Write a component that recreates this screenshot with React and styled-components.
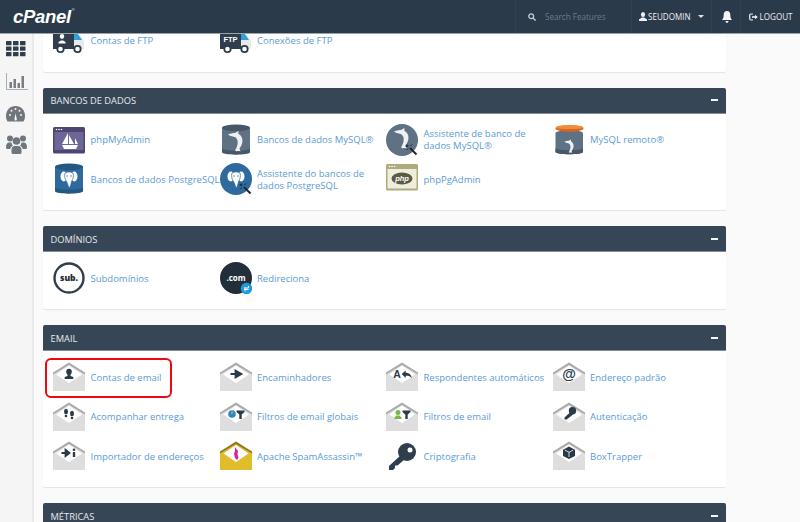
import React from "react";
import styled, { createGlobalStyle } from "styled-components";

const Global = createGlobalStyle`
  html, body { margin: 0; padding: 0; height: 100%; background: #fafafa; }
  body { font-family: "Open Sans", "Liberation Sans", sans-serif; overflow: hidden; }
  #root { height: 100%; }
`;

const Page = styled.div`
  width: 800px; height: 522px; display: flex; flex-direction: column; overflow: hidden;
`;
const TopBar = styled.header`
  height: 33px; flex: none; display: flex; align-items: stretch; justify-content: space-between;
  background: #2a3a4b; border-bottom: 1px solid #9aa2aa; z-index: 2;
`;
const Logo = styled.div`
  padding: 4px 0 0 13px; font-family: "Liberation Sans", sans-serif; font-size: 18.5px; font-weight: 700;
  font-style: italic; color: #fff; letter-spacing: -0.3px; line-height: 26px; display: flex; align-items: flex-start;
  sup { font-size: 4px; line-height: 12px; font-style: normal; font-weight: 400; margin-left: 1px; }
`;
const TopNav = styled.nav`
  display: flex; align-items: stretch;
`;
const NavCell = styled.div`
  width: ${p => p.$w}px; box-sizing: border-box; border-left: 1px solid #31414f; display: flex; align-items: center;
  padding-left: ${p => p.$pl}px; gap: ${p => p.$gap || 0}px; font-size: 8.1px; color: ${p => p.$muted ? "#6d7a87" : "#eef0f2"};
  white-space: nowrap;
`;
const Layout = styled.div`
  flex: 1; min-height: 0; display: flex;
`;
const Side = styled.aside`
  width: 26px; flex: none; background: #f5f5f5; border-right: 2px solid #e9e9e9; display: flex; flex-direction: column;
  align-items: flex-start; padding: 7px 0 0 6px;
`;
const SideIcon = styled.div`
  height: ${p => p.$h}px; display: flex; align-items: flex-start;
`;
const Main = styled.main`
  flex: 1; min-width: 0; overflow: hidden; padding: 0 74px 0 9px;
`;
const Scroller = styled.div`
  margin-top: -19.5px; display: flex; flex-direction: column; gap: 16px;
`;
const Panel = styled.section`
  background: #fff; border-radius: 2px; box-shadow: 0 1px 1px rgba(0,0,0,.09);
`;
const PanelHead = styled.div`
  height: 26px; box-sizing: border-box; background: #364656; border-bottom: 1px solid #7f8b96; border-radius: 2px 2px 0 0;
  padding: 1px 8px 0 7.5px; display: flex; align-items: center; justify-content: space-between;
  color: #e6e9ec; font-size: 9.3px; text-transform: uppercase;
`;
const Collapse = styled.span`
  width: 7px; height: 2px; background: #f4f5f6; display: block; margin-top: -1px;
`;
const Grid = styled.div`
  display: grid; grid-template-columns: repeat(4, 166.5px); row-gap: 7.5px; padding: 10px 0 15px 10px;
`;
const Item = styled.a`
  position: relative; display: flex; align-items: center; height: 32px; gap: 5.5px; color: #5b9bd5; font-size: 9.5px;
  line-height: 12px; text-decoration: none; white-space: nowrap;
  svg { flex: none; }
  ${p => p.$hl && `
    &::after {
      content: ""; position: absolute; left: -8px; top: -3px; width: 127px; height: 40px; box-sizing: border-box;
      border: 2px solid #ee0612; border-radius: 6px;
    }
  `}
`;
const Label = styled.span`
  padding-top: 1px;
`;

const Ic = ({ children, w = 32, h = 32 }) => (
  <svg width={w} height={h} viewBox={`0 0 ${w} ${h}`}>{children}</svg>
);

const D = "#2b3a49";
const Env = ({ children }) => (
  <Ic>
    <path d="M0 12.5 16 2 32 12.5V30H0Z" fill="#dedede" />
    <path d="M0 13.500V11.500L16 1.500 32 11.500V13.500L16 4Z" fill="#aaa" />
    <path d="M3 13.500 16 4.500 29 13.500 16 22Z" fill="#fff" />
    {children}
  </Ic>
);

const Truck = ({ children }) => (
  <Ic>
    <path d="M21 10h6l4 6v8H21Z" fill="#e7e9ea" />
    <path d="M21 8.500h3.500l4.500 6.500h-8Z" fill="#2f9fe0" />
    <path d="M0 0H21V24H0Z" fill="#2f3d4c" />
    <circle cx="7.500" cy="24" r="3.200" fill="#fff" stroke={D} strokeWidth="1.800" />
    <circle cx="24.500" cy="24" r="3.200" fill="#fff" stroke={D} strokeWidth="1.800" />
    {children}
  </Ic>
);

const DOLPHIN = "M8 10.500C10.500 9.500 13 9 15 9L18.500 7 18.300 9.800C21.500 11.500 23 15 22.300 18.500 21.800 21 20.500 23 19.500 24.500L20.500 27.500C19 27 17.500 26.800 16.500 27.500 16 26.800 15.500 26.500 15 26.500 16.500 24 17.500 21.500 17.700 19 18 16 16.500 13.500 14 12.800 12 12.300 10 12 8 10.500Z";
const Dolphin = ({ t }) => <path transform={t} d={DOLPHIN} fill="#eef1f3" />;

const Elephant = ({ x = 0, y = 0, s = 1, c = "#2e6a9e" }) => (
  <g transform={`translate(${x} ${y}) scale(${s})`}>
    <ellipse cx="3.300" cy="5.500" rx="3.300" ry="5" fill="#fff" />
    <ellipse cx="13.700" cy="5.500" rx="3.300" ry="5" fill="#fff" />
    <path d="M4.500 2C6.500.5 10.500.5 12.500 2 13.500 5 12.500 8.500 11 10.500 10.500 12.500 10.300 15 9 16.500 8 16.500 7.500 13 6 10.500 4.500 8.500 3.500 5 4.500 2Z" fill="#fff" stroke={c} strokeWidth=".7" />
    <circle cx="6.500" cy="5" r=".7" fill={c} />
    <circle cx="10.500" cy="5" r=".7" fill={c} />
  </g>
);

const Wand = ({ x, y }) => (
  <g transform={`translate(${x} ${y})`} fill="none">
    <path d="M0 0 6.500 6.500" stroke="#1c2730" strokeWidth="2" />
    <path d="M-3-3.500V-1M-4.500-2H-1.500M2-3.500 .5-2M-3.500 2-2 .5" stroke="#10181f" strokeWidth=".9" />
  </g>
);

const Db = ({ mid, bottom, children }) => (
  <Ic>
    <path d="M2 4V28C2 31 30 31 30 28V4Z" fill={mid} />
    <path d="M2 24V28C2 31.500 30 31.500 30 28V24C30 27.500 2 27.500 2 24Z" fill={bottom} />
    <ellipse cx="16" cy="3.800" rx="14" ry="3.300" fill={bottom} />
    {children}
  </Ic>
);

const G = ({ children }) => <g transform="translate(0 2)">{children}</g>;

const icons = {
  ftp: <Truck>
    <ellipse cx="9" cy="11.500" rx="2.200" ry="2.400" fill="#fff" />
    <path d="M5.500 18.500V17L8 15.500H10L12.500 17V18.500Z" fill="#fff" />
  </Truck>,
  ftp2: <Truck>
    <text x="10.500" y="17" textAnchor="middle" fontFamily="Liberation Sans" fontWeight="700" fontSize="7.500" fill="#fff">FTP</text>
  </Truck>,
  pma: <Ic>
    <rect x="0" y="3" width="32" height="26.500" rx="1.500" fill="#4d4672" />
    <rect x="1.500" y="8" width="29" height="18" fill="#6d6798" />
    <circle cx="3.500" cy="5.500" r=".8" fill="#fff" /><circle cx="6" cy="5.500" r=".8" fill="#fff" /><circle cx="8.500" cy="5.500" r=".8" fill="#fff" />
    <path d="M15 9V20H9ZM16 11 21 20H16ZM22 14 25 20H22ZM9 21H25L23 25H11Z" fill="#fff" />
  </Ic>,
  mysql: <Db mid="#5f7284" bottom="#465767"><Dolphin t="translate(0 0)" /></Db>,
  mysqlWiz: <Ic>
    <circle cx="16" cy="16" r="16" fill="#5f7284" />
    <Dolphin t="translate(0 -3)" />
    <Wand x="24" y="24" />
  </Ic>,
  mysqlRemote: <Ic>
    <path d="M2.500 9V28C2.500 31 30 31 30 28V9Z" fill="#5f7284" />
    <path d="M2.500 24V28C2.500 31 30 31 30 28V24C30 27 2.500 27 2.500 24Z" fill="#465767" />
    <ellipse cx="16.300" cy="9" rx="13.700" ry="2.800" fill="#5f7284" />
    <ellipse cx="16.500" cy="4.500" rx="14" ry="3.300" fill="#d9661a" />
    <path d="M2.500 3.500C2.500 0 30.500 0 30.500 3.500 30.500 5.500 2.500 5.500 2.500 3.500Z" fill="#f08d3d" />
    <Dolphin t="translate(6 11) scale(.65)" />
  </Ic>,
  pg: <Db mid="#2e6a9e" bottom="#235880"><Elephant x="7.500" y="8" /></Db>,
  pgWiz: <Ic>
    <circle cx="16" cy="16" r="16" fill="#2e6a9e" />
    <Elephant x="7.500" y="8" />
    <Wand x="24" y="24" />
  </Ic>,
  pgAdmin: <Ic>
    <rect x="0" y="1" width="32" height="26.500" rx="1.500" fill="#aeaa7c" />
    <rect x="1.500" y="6" width="29" height="19.500" fill="#efeddc" />
    <circle cx="3.500" cy="3.500" r=".8" fill="#fff" /><circle cx="6" cy="3.500" r=".8" fill="#fff" /><circle cx="8.500" cy="3.500" r=".8" fill="#fff" />
    <ellipse cx="16" cy="15.500" rx="10.500" ry="6" fill="#5b5a45" />
    <text x="16" y="18" textAnchor="middle" fontFamily="Liberation Sans" fontWeight="700" fontStyle="italic" fontSize="7.500" fill="#fff">php</text>
  </Ic>,
  sub: <Ic>
    <circle cx="16" cy="16" r="14.500" fill="#fff" stroke="#2f3d4c" strokeWidth="2.400" />
    <text x="16" y="19" textAnchor="middle" fontFamily="Open Sans" fontWeight="800" fontSize="8.500" fill="#222c36">sub.</text>
  </Ic>,
  com: <Ic>
    <circle cx="16" cy="16" r="16" fill="#222f3b" />
    <text x="16" y="18.500" textAnchor="middle" fontFamily="Open Sans" fontWeight="700" fontSize="8" fill="#fff">.com</text>
    <circle cx="26.500" cy="26.500" r="5.700" fill="#1f9be0" />
    <path d="M24 26H28.500V24M28.500 27.500H24M25.800 25.800 24 27.500 25.800 29.200" stroke="#fff" strokeWidth="1" fill="none" />
  </Ic>,
  accounts: <Env>
    <ellipse cx="16" cy="10.800" rx="2.800" ry="3" fill={D} />
    <path d="M14.500 13h3v2l2.800 1v2H11.700v-2l2.800-1Z" fill={D} />
  </Env>,
  forward: <Env><G>
    <path d="M10.500 11h6M15.500 7.500l6 3.500-6 3.500Z" stroke={D} strokeWidth="1.800" fill={D} />
  </G></Env>,
  auto: <Env><G>
    <text x="11" y="15" textAnchor="middle" fontFamily="Liberation Sans" fontWeight="700" fontSize="10.500" fill={D}>A</text>
    <path d="M15.700 11l4-3.500v2.300c3.500 0 5.700 2.200 6 5.500-1.200-2-3-2.500-6-2.500v2.200Z" fill={D} />
  </G></Env>,
  at: <Env>
    <text x="16" y="17.500" textAnchor="middle" fontFamily="Liberation Sans" fontWeight="700" fontSize="14" fill={D}>@</text>
  </Env>,
  track: <Env><G>
    <ellipse cx="13" cy="8.500" rx="2" ry="2.700" fill={D} /><circle cx="13" cy="13" r="1.300" fill={D} />
    <ellipse cx="19" cy="10.500" rx="2" ry="2.700" fill={D} /><circle cx="19" cy="15" r="1.300" fill={D} />
  </G></Env>,
  globalFilter: <Env><G>
    <circle cx="12" cy="11" r="3.800" fill="#2b86c5" />
    <path d="M11 8.500h2.500l-.5 2-2 1Z" fill="#8ab34a" />
    <path d="M16.500 7.500h8V9l-2.800 2.500V16h-2.400v-4.500L16.500 9Z" fill={D} />
  </G></Env>,
  filter: <Env><G>
    <circle cx="12" cy="9.500" r="2.500" fill="#7ab648" />
    <path d="M8.500 16v-1.500l2-2h3l2 2V16Z" fill="#7ab648" />
    <path d="M16.500 7.500h8V9l-2.800 2.500V16h-2.400v-4.500L16.500 9Z" fill={D} />
  </G></Env>,
  auth: <Env>
    <circle cx="19.500" cy="9.800" r="3.700" fill={D} />
    <path d="M17.500 11 11.500 16.500v2h2.200L20 13.500Z" fill={D} />
  </Env>,
  importer: <Env><G>
    <path d="M8.500 11H15M12.500 7.800l4 3.200-4 3.200Z" stroke={D} strokeWidth="1.800" fill={D} />
    <circle cx="21" cy="7.700" r="1.300" fill={D} />
    <path d="M19.800 10h2.400v5h-2.400Z" fill={D} />
  </G></Env>,
  spam: <Ic>
    <path d="M0 12.5 16 2 32 12.5V30H0Z" fill="#e1bc2b" />
    <path d="M0 13.500V11.500L16 1.500 32 11.500V13.500L16 4Z" fill="#8f7722" />
    <path d="M3.500 13.500 16 5 28.500 13.500 16 22Z" fill="#fff" />
    <path d="M15 7 16.500 9 18 11 17.500 14 18.500 18 17 20 15 18 14 14 15 11Z" fill="#d6249f" />
  </Ic>,
  crypto: <Ic>
    <circle cx="21" cy="12" r="9" fill="#2f3d4c" />
    <circle cx="24" cy="10" r="2.500" fill="#fff" />
    <path d="M15 15 3 26V30H7L9 28V25.500H11.500L19 19Z" fill="#2f3d4c" />
  </Ic>,
  box: <Env><G>
    <path d="M16 4.500 22 7.700 22 14 16 17 10 14V7.700Z" fill={D} />
    <path d="M11.800 8 16 10.300 20.200 8M16 10.300V15" stroke="#fff" strokeWidth=".8" fill="none" />
  </G></Env>,
};

const sections = [
  { items: [["ftp", "Contas de FTP"], ["ftp2", "Conexões de FTP"]] },
  { title: "Bancos de dados", items: [
    ["pma", "phpMyAdmin"], ["mysql", "Bancos de dados MySQL®"], ["mysqlWiz", <>Assistente de banco de<br />dados MySQL®</>], ["mysqlRemote", "MySQL remoto®"],
    ["pg", "Bancos de dados PostgreSQL"], ["pgWiz", <>Assistente do bancos de<br />dados PostgreSQL</>], ["pgAdmin", "phpPgAdmin"],
  ] },
  { title: "Domínios", items: [["sub", "Subdomínios"], ["com", "Redireciona"]] },
  { title: "Email", items: [
    ["accounts", "Contas de email", true], ["forward", "Encaminhadores"], ["auto", "Respondentes automáticos"], ["at", "Endereço padrão"],
    ["track", "Acompanhar entrega"], ["globalFilter", "Filtros de email globais"], ["filter", "Filtros de email"], ["auth", "Autenticação"],
    ["importer", "Importador de endereços"], ["spam", "Apache SpamAssassin™"], ["crypto", "Criptografia"], ["box", "BoxTrapper"],
  ] },
  { title: "Métricas", items: [] },
];

export default function App() {
  return (
    <Page>
      <Global />
      <TopBar>
        <Logo>cPanel<sup>®</sup></Logo>
        <TopNav>
          <NavCell $w={115.5} $pl={12} $gap={9} $muted>
            <svg width="8" height="8" viewBox="0 0 8 8" fill="none" stroke="#c9ced3" strokeWidth="1.300"><circle cx="3.200" cy="3.200" r="2.400" /><path d="M5 5 7.600 7.600" /></svg>
            Search Features
          </NavCell>
          <NavCell $w={80.5} $pl={7} $gap={1.5}>
            <svg width="8" height="9" viewBox="0 0 8 9" fill="#eef0f2"><ellipse cx="4" cy="2.500" rx="2.100" ry="2.500" /><path d="M0 9V7.500L2.800 5.500H5.200L8 7.500V9Z" /></svg>
            SEUDOMIN
            <svg style={{ marginLeft: 6 }} width="6" height="3" viewBox="0 0 6 3" fill="#dfe2e5"><path d="M0 0H6L3 3Z" /></svg>
          </NavCell>
          <NavCell $w={29} $pl={10}>
            <svg width="10" height="12" viewBox="0 0 10 12" fill="#f3f4f5"><path d="M5 0C7.500 0 8.300 2 8.300 4 8.300 6.500 9 7.700 10 9H0C1 7.700 1.700 6.500 1.700 4 1.700 2 2.500 0 5 0ZM3.500 10H6.500C6.500 11 6 11.800 5 11.800S3.500 11 3.500 10Z" /></svg>
          </NavCell>
          <NavCell $w={60} $pl={8} $gap={1.5}>
            <svg width="9" height="8" viewBox="0 0 9 8" fill="none" stroke="#eef0f2" strokeWidth="1.200"><path d="M4 1H2C1 1 .7 1.500.7 2.500V5.500C.7 6.500 1 7 2 7H4" /><path d="M3 4H6.500" strokeWidth="1.600" /><path d="M6 1.800 8.800 4 6 6.200Z" fill="#eef0f2" stroke="none" /></svg>
            LOGOUT
          </NavCell>
        </TopNav>
      </TopBar>
      <Layout>
        <Side>
          <SideIcon $h={32}>
            <svg width="20" height="16" viewBox="0 0 20 16" fill="#2f3d4c">
              {[0, 5.5, 11].flatMap(y => [0, 7, 14].map(x => <rect key={`${x}-${y}`} x={x} y={y} width="5.500" height="4.300" rx=".6" />))}
            </svg>
          </SideIcon>
          <SideIcon $h={33}>
            <svg width="22" height="17" viewBox="0 0 22 17">
              <path d="M.5 0V16.500H22" fill="none" stroke="#a9adb1" />
              <path d="M3.500 9H6V15H3.500ZM7.500 6H10V15H7.500ZM11.500 10H14V15H11.500ZM15.500 3H18V15H15.500Z" fill="#787e84" />
            </svg>
          </SideIcon>
          <SideIcon $h={29}>
            <svg width="19" height="16" viewBox="0 0 19 16" fill="#70767c">
              <path d="M9.500 0C15 0 19 4 19 10 19 12 18.500 14 17.500 15.500H1.500C.5 14 0 12 0 10 0 4 4 0 9.500 0Z" />
              <path d="M8.500 13 9.500 7.500 10.800 13C10.800 15 8.500 15 8.500 13Z" fill="#fff" />
              <circle cx="4" cy="9" r="1" fill="#f5f5f5" /><circle cx="5.500" cy="4.800" r="1" fill="#f5f5f5" /><circle cx="9.500" cy="3" r="1" fill="#f5f5f5" /><circle cx="13.500" cy="4.800" r="1" fill="#f5f5f5" /><circle cx="15" cy="9" r="1" fill="#f5f5f5" />
            </svg>
          </SideIcon>
          <SideIcon $h={20}>
            <svg width="21" height="19" viewBox="0 0 21 19" fill="#70767c">
              <circle cx="4" cy="3.500" r="3" /><circle cx="17" cy="3.500" r="3" /><circle cx="10.500" cy="6" r="3.800" />
              <path d="M0 12C0 9 1.500 7.500 3 7.500H5.500C5.800 9 6.200 10 7 10.800 5.500 11.500 4.500 12.500 4.300 14H1C.3 14 0 13 0 12ZM21 12C21 9 19.500 7.500 18 7.500H15.500C15.200 9 14.800 10 14 10.800 15.500 11.500 16.500 12.500 16.700 14H20C20.700 14 21 13 21 12ZM5.500 15C5.500 12.500 7 11 8.500 11H12.500C14 11 15.500 12.500 15.500 15V17.500C15.500 18.500 14.500 19 13.500 19H7.500C6.500 19 5.500 18.500 5.500 17.500Z" />
            </svg>
          </SideIcon>
        </Side>
        <Main>
          <Scroller>
            {sections.map((s, i) => (
              <Panel key={i}>
                {s.title && <PanelHead>{s.title}<Collapse /></PanelHead>}
                {s.items.length > 0 && (
                  <Grid>
                    {s.items.map(([ic, label, hl], j) => (
                      <Item key={j} $hl={hl}>{icons[ic]}<Label>{label}</Label></Item>
                    ))}
                  </Grid>
                )}
              </Panel>
            ))}
          </Scroller>
        </Main>
      </Layout>
    </Page>
  );
}
